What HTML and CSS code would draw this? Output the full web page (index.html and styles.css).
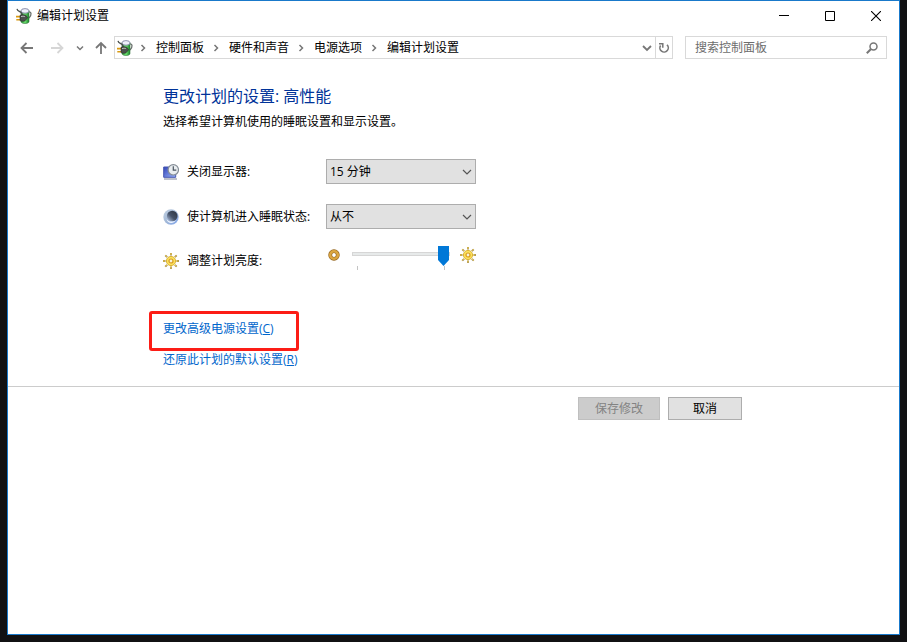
FILE: index.html
```
<!DOCTYPE html>
<html lang="zh-CN">
<head>
    <meta charset="UTF-8">
    <meta name="viewport" content="width=device-width, initial-scale=1.0">
    <title>编辑计划设置</title>
    <link rel="stylesheet" href="styles.css">
</head>
<body>
    <!-- shared icons -->
    <svg class="icon-defs" width="0" height="0" aria-hidden="true">
        <defs>
            <linearGradient id="battery-green" x1="0" x2="1" y1="0" y2="0">
                <stop offset="0" stop-color="#2a9a3a"/>
                <stop offset="0.5" stop-color="#6fe070"/>
                <stop offset="1" stop-color="#168428"/>
            </linearGradient>
            <linearGradient id="screen-blue" x1="0" x2="1" y1="0" y2="1">
                <stop offset="0" stop-color="#3345b8"/>
                <stop offset="1" stop-color="#98b4fb"/>
            </linearGradient>
            <linearGradient id="moon-blue" x1="0" x2="1" y1="0" y2="1">
                <stop offset="0" stop-color="#c3d2e2"/>
                <stop offset="0.5" stop-color="#a3b9d8"/>
                <stop offset="1" stop-color="#7ba2ec"/>
            </linearGradient>
            <linearGradient id="moon-dark" x1="1" x2="0" y1="0" y2="1">
                <stop offset="0" stop-color="#2b313c"/>
                <stop offset="0.55" stop-color="#46536a"/>
                <stop offset="1" stop-color="#b9cbe8"/>
            </linearGradient>
            <symbol id="power" viewBox="0 0 16 16">
                <path d="M12.500 4c3-.5 3.500 3 .5 6" fill="none" stroke="#6b716e" stroke-width="1.300"/>
                <path d="M5 2.500v11c0 2.700 8 2.700 8 0v-11z" fill="url(#battery-green)" stroke="#3c7a45" stroke-width=".6"/>
                <ellipse cx="9" cy="2.900" rx="4" ry="2.300" fill="#eef0fa" stroke="#75789a" stroke-width=".8"/>
                <path d="M1 .8c.5 2.400 2.500 2.200 3.800 3.400 1 1 1 2 1.700 3" fill="none" stroke="#49504d" stroke-width="1.300"/>
                <path d="M0 8.600h4M.3 11.700h4" stroke="#d99a10" stroke-width="1.600"/>
                <path d="M4 7.300c2-.9 4-.6 6 .1l1.600 2.400-2.600 3c-1.600.8-3.600.6-5-.2z" fill="#4b504d" stroke="#1c1f1d" stroke-width=".5"/>
                <path d="M5 8.600c1.500-.5 2.500-.4 3.800 0" fill="none" stroke="#b9c0bd" stroke-width="1"/>
            </symbol>
            <symbol id="sun" viewBox="1 1 16 16">
                <path d="M9 1v2.500M9 14.500V17M1 9h2.500M14.500 9H17M3.300 3.300l1.900 1.900M12.800 12.800l1.900 1.900M3.300 14.700l1.900-1.900M12.800 5.200l1.900-1.900" stroke="#a08d58" stroke-width="1.800"/>
                <path d="M9 1v2M9 14.500v2M1 9h2M14.500 9h2M3.300 3.300l1.500 1.500M13 13l1.500 1.500M3.300 14.500l1.500-1.500M13 4.800l1.500-1.500" stroke="#f0c73c" stroke-width="1"/>
                <circle cx="9" cy="9" r="4.600" fill="#fbe15c" stroke="#dcb436" stroke-width="1"/>
                <circle cx="9" cy="9" r="2" fill="#f7f3dc" stroke="#d99c22" stroke-width="1.200"/>
            </symbol>
            <symbol id="chevron-right" viewBox="0 0 8 8">
                <path d="M2.500 1L5.500 4l-3 3" fill="none" stroke="#777" stroke-width="1.500"/>
            </symbol>
        </defs>
    </svg>

    <div class="window">
        <header class="titlebar">
            <svg class="app-icon"><use href="#power"/></svg>
            <h1 class="window-title">编辑计划设置</h1>
            <div class="window-buttons">
                <button class="window-button" aria-label="最小化">
                    <svg width="10" height="10"><path d="M0 4.500h10" stroke="#000"/></svg>
                </button>
                <button class="window-button" aria-label="最大化">
                    <svg width="10" height="10"><path d="M.5.5h9v9h-9z" fill="none" stroke="#000"/></svg>
                </button>
                <button class="window-button" aria-label="关闭">
                    <svg width="10" height="10"><path d="M0 0l10 10M10 0L0 10" stroke="#000" stroke-width="1.100"/></svg>
                </button>
            </div>
        </header>

        <nav class="navbar">
            <button class="nav-button" aria-label="后退">
                <svg width="14" height="12"><path d="M13 6H2M6.500 1L1.500 6l5 5" fill="none" stroke="#777" stroke-width="1.800"/></svg>
            </button>
            <button class="nav-button" aria-label="前进" disabled>
                <svg width="14" height="12"><path d="M1 6h11M7.500 1l5 5-5 5" fill="none" stroke="#d6d6d6" stroke-width="1.800"/></svg>
            </button>
            <button class="nav-button nav-recent" aria-label="最近的位置">
                <svg width="8" height="6"><path d="M1 1.500l3 3 3-3" fill="none" stroke="#777" stroke-width="1.500"/></svg>
            </button>
            <button class="nav-button nav-up" aria-label="上移">
                <svg width="12" height="14"><path d="M6 13V2M1 7l5-5 5 5" fill="none" stroke="#777" stroke-width="1.800"/></svg>
            </button>

            <div class="address-bar">
                <svg class="app-icon"><use href="#power"/></svg>
                <ol class="breadcrumb">
                    <li><svg class="crumb-arrow"><use href="#chevron-right"/></svg><a href="#">控制面板</a></li>
                    <li><svg class="crumb-arrow"><use href="#chevron-right"/></svg><a href="#">硬件和声音</a></li>
                    <li><svg class="crumb-arrow"><use href="#chevron-right"/></svg><a href="#">电源选项</a></li>
                    <li><svg class="crumb-arrow"><use href="#chevron-right"/></svg><a href="#">编辑计划设置</a></li>
                </ol>
                <button class="address-button" aria-label="以前的位置">
                    <svg width="10" height="8"><path d="M1 2l4 4 4-4" fill="none" stroke="#777" stroke-width="1.800"/></svg>
                </button>
                <button class="address-button refresh" aria-label="刷新">
                    <svg width="12" height="12"><path d="M9 2.800A4.200 4.200 0 1 1 2.600 3.500" fill="none" stroke="#777" stroke-width="1.600"/><path d="M1 1.800h3.800v4" fill="none" stroke="#777" stroke-width="1.500"/></svg>
                </button>
            </div>

            <div class="search-box">
                <input type="text" class="search-input" placeholder="搜索控制面板" aria-label="搜索控制面板">
                <button class="search-button" aria-label="搜索">
                    <svg width="12" height="12"><circle cx="7.500" cy="4.500" r="3.500" fill="none" stroke="#777" stroke-width="1.500"/><path d="M5 7L.8 11.200" stroke="#777" stroke-width="2"/></svg>
                </button>
            </div>
        </nav>

        <main>
            <section class="content">
                <h2 class="heading">更改计划的设置: 高性能</h2>
                <p class="description">选择希望计算机使用的睡眠设置和显示设置。</p>

                <div class="setting">
                    <svg class="setting-icon" viewBox="0 0 16 16">
                        <path d="M.7 3h12v10.300H.7z" fill="url(#screen-blue)" stroke="#4555b0"/>
                        <path d="M1 15h13" stroke="#a3a7b5" stroke-width="1.400"/>
                        <circle cx="10.300" cy="5.800" r="5.200" fill="#e9edf0" stroke="#858d96" stroke-width="1.200"/>
                        <path d="M10.300 2.200v4h3" fill="none" stroke="#4b5560" stroke-width="1.200"/>
                    </svg>
                    <label for="display-off">关闭显示器:</label>
                    <div class="select-wrap">
                        <select id="display-off" class="select">
                            <option>15 分钟</option>
                        </select>
                        <svg class="select-arrow" viewBox="0 0 10 6"><path d="M1 1l4 4 4-4" fill="none" stroke="#555" stroke-width="1.200"/></svg>
                    </div>
                </div>

                <div class="setting">
                    <svg class="setting-icon" viewBox="0 0 16 16">
                        <circle cx="8" cy="8" r="7.700" fill="url(#moon-blue)"/>
                        <circle cx="9.200" cy="7" r="5.300" fill="url(#moon-dark)"/>
                        <path d="M3.500 10c2 3 6.500 3.500 9.500 1-2 4-8.500 4-9.500-1z" fill="#f0f6ff"/>
                    </svg>
                    <label for="sleep">使计算机进入睡眠状态:</label>
                    <div class="select-wrap">
                        <select id="sleep" class="select">
                            <option>从不</option>
                        </select>
                        <svg class="select-arrow" viewBox="0 0 10 6"><path d="M1 1l4 4 4-4" fill="none" stroke="#555" stroke-width="1.200"/></svg>
                    </div>
                </div>

                <div class="setting brightness-setting">
                    <svg class="setting-icon"><use href="#sun"/></svg>
                    <label for="brightness">调整计划亮度:</label>
                    <div class="brightness">
                        <svg class="dim-icon" viewBox="0 0 12 12">
                            <circle cx="6" cy="6" r="3.800" fill="none" stroke="#94641c" stroke-width="3.800"/>
                            <circle cx="6" cy="6" r="3.800" fill="none" stroke="#dba640" stroke-width="2.600"/>
                        </svg>
                        <div class="slider-wrap">
                            <input type="range" id="brightness" class="slider" min="0" max="100" value="100">
                            <div class="ticks"></div>
                        </div>
                        <svg class="bright-icon"><use href="#sun"/></svg>
                    </div>
                </div>

                <div class="links">
                    <a href="#" class="link highlight">更改高级电源设置(<u>C</u>)</a>
                    <a href="#" class="link">还原此计划的默认设置(<u>R</u>)</a>
                </div>
            </section>

            <footer class="actions">
                <button class="button save" disabled>保存修改</button>
                <button class="button">取消</button>
            </footer>
        </main>
    </div>
</body>
</html>
```

FILE: styles.css
```
* {
    margin: 0;
    padding: 0;
    box-sizing: border-box;
}

body {
    display: flex;
    min-height: 100vh;
    padding: 0 7px 7px;
    background-color: #111113;
    color: #000;
    font-family: "Open Sans", "Noto Sans CJK SC", sans-serif;
    font-size: 12px;
    line-height: 20px;
}

button,
input,
select {
    font: inherit;
    color: inherit;
}

button {
    display: flex;
    align-items: center;
    justify-content: center;
    border: none;
    background-color: transparent;
}

svg {
    display: block;
    flex-shrink: 0;
}

.icon-defs {
    position: absolute;
}

.window {
    flex: 1;
    min-width: 0;
    border: 1px solid #1979ca;
    background-color: #fff;
}

/* title bar */
.titlebar {
    display: flex;
    align-items: center;
    height: 29px;
    padding-left: 8px;
}

.app-icon {
    width: 16px;
    height: 16px;
}

.window-title {
    flex: 1;
    margin-left: 5px;
    font-size: 12px;
    font-weight: normal;
}

.window-buttons {
    display: flex;
}

.window-button {
    width: 46px;
    height: 29px;
}

.window-button:hover {
    background-color: #e5e5e5;
}

/* navigation row */
.navbar {
    display: flex;
    align-items: center;
    padding: 6px 12px 6px 4px;
}

.nav-button {
    width: 30px;
    height: 23px;
}

.nav-recent {
    width: 16px;
}

.nav-up {
    width: 26px;
}

.address-bar {
    display: flex;
    flex: 1;
    align-items: center;
    min-width: 0;
    height: 23px;
    padding-left: 2px;
    border: 1px solid #d9d9d9;
}

.breadcrumb {
    display: flex;
    flex: 1;
    min-width: 0;
    overflow: hidden;
    list-style: none;
    white-space: nowrap;
}

.breadcrumb li {
    display: flex;
    align-items: center;
}

.breadcrumb a {
    color: #000;
    text-decoration: none;
}

.crumb-arrow {
    width: 8px;
    height: 8px;
    margin: 0 9px 0 8px;
}

.breadcrumb li:first-child .crumb-arrow {
    margin-left: 6px;
}

.address-button {
    width: 16px;
    height: 21px;
}

.refresh {
    width: 17px;
    border-left: 1px solid #d9d9d9;
}

.search-box {
    display: flex;
    align-items: center;
    width: 202px;
    height: 23px;
    margin-left: 12px;
    border: 1px solid #d9d9d9;
}

.search-input {
    flex: 1;
    min-width: 0;
    height: 21px;
    padding-left: 9px;
    border: none;
    outline: none;
    background-color: transparent;
}

.search-input::placeholder {
    color: #6d6d6d;
    opacity: 1;
}

.search-button {
    width: 28px;
    height: 21px;
}

/* plan settings */
.content {
    padding: 19px 155px 16px;
    border-bottom: 1px solid #ccc;
}

.heading {
    color: #003399;
    font-size: 16px;
    font-weight: normal;
    line-height: 24px;
}

.description {
    margin: 4px 0 27px;
}

.setting {
    display: grid;
    grid-template-columns: 16px 131px 150px;
    column-gap: 8px;
    align-items: center;
    margin-top: 20px;
}

.setting-icon {
    width: 16px;
    height: 16px;
}

.select-wrap {
    position: relative;
}

.select {
    display: block;
    width: 100%;
    height: 25px;
    padding: 0 24px 0 3px;
    border: 1px solid #adadad;
    border-radius: 0;
    background-color: #e1e1e1;
    appearance: none;
}

.select-arrow {
    position: absolute;
    top: 10px;
    right: 4px;
    width: 10px;
    height: 6px;
    pointer-events: none;
}

.brightness-setting {
    margin-top: 15px;
}

.brightness {
    display: flex;
    align-items: flex-start;
    justify-content: space-between;
    height: 34px;
}

.dim-icon {
    width: 12px;
    height: 12px;
    margin: 5px 0 0 2px;
}

.bright-icon {
    width: 16px;
    height: 16px;
    margin-top: 3px;
}

.slider-wrap {
    width: 98px;
    margin-left: 2px;
}

.slider {
    display: block;
    width: 100%;
    height: 20px;
    background-color: transparent;
    appearance: none;
}

.slider::-webkit-slider-runnable-track {
    height: 4px;
    border: 1px solid #d6d6d6;
    background-color: #e7eaea;
}

.slider::-webkit-slider-thumb {
    width: 11px;
    height: 20px;
    margin-top: -7px;
    background-color: #0078d7;
    clip-path: polygon(0 0, 100% 0, 100% 70%, 50% 100%, 0 70%);
    appearance: none;
}

.ticks {
    height: 4px;
    margin: 2px 5px 0;
    border: solid #c4c4c4;
    border-width: 0 1px;
}

.links {
    display: flex;
    flex-direction: column;
    align-items: flex-start;
    gap: 11px;
    margin-top: 41px;
}

.link {
    color: #0066cc;
    text-decoration: none;
}

.highlight {
    position: relative;
}

/* red frame around the advanced settings link */
.highlight::after {
    content: "";
    position: absolute;
    inset: -8px -25px -12px -14px;
    border: 3px solid #fc1d16;
    border-radius: 3px;
}

.actions {
    display: flex;
    justify-content: flex-end;
    gap: 8px;
    padding: 10px 157px;
}

.button {
    width: 74px;
    height: 23px;
    border: 1px solid #adadad;
    background-color: #e1e1e1;
}

.button:disabled {
    border-color: #bfbfbf;
    background-color: #ccc;
    color: #838383;
}

.save {
    width: 82px;
}
```
